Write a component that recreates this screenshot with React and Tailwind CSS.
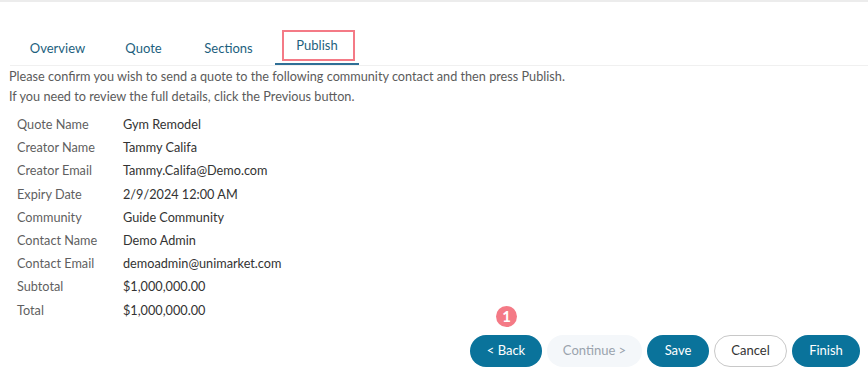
import React from "react";

const rows = [
  ["Quote Name", "Gym Remodel"],
  ["Creator Name", "Tammy Califa"],
  ["Creator Email", "Tammy.Califa@Demo.com"],
  ["Expiry Date", "2/9/2024 12:00 AM"],
  ["Community", "Guide Community"],
  ["Contact Name", "Demo Admin"],
  ["Contact Email", "demoadmin@unimarket.com"],
  ["Subtotal", "$1,000,000.00"],
  ["Total", "$1,000,000.00"],
];

export default function App() {
  return (
    <div
      className="w-[868px] h-[379px] bg-white flex flex-col border-t-2 border-[#ececec] overflow-hidden"
      style={{ fontFamily: "Lato, 'Noto Sans', sans-serif" }}
    >
      <div className="mt-[30px] ml-[10px] flex items-end border-b border-[#f0f0f0] h-[34px] text-[13px] text-[#1d5f7e]">
        <div className="w-[95px] h-full flex items-center justify-center">Overview</div>
        <div className="w-[77px] h-full flex items-center justify-center">Quote</div>
        <div className="w-[93px] h-full flex items-center justify-center">Sections</div>
        <div className="w-[84px] h-full flex items-center justify-center border-b-2 border-[#2f6f96] relative">
          <div className="absolute left-[7px] top-[-2px] w-[73px] h-[31px] border-2 border-[#f47a86]" />
          <span className="mt-[-3px]">Publish</span>
        </div>
      </div>
      <div className="ml-[9px] mt-[0px] text-[12.7px] leading-[20px] text-[#5b5b5b]">
        <div>Please confirm you wish to send a quote to the following community contact and then press Publish.</div>
        <div>If you need to review the full details, click the Previous button.</div>
      </div>
      <div className="ml-[17px] mt-[7px] flex flex-col text-[12.7px]">
        {rows.map(([k, v]) => (
          <div key={k} className="flex h-[23.2px] items-center">
            <div className="w-[106px] text-[#5f5f5f]">{k}</div>
            <div className="text-[#333333]">{v}</div>
          </div>
        ))}
      </div>
      <div className="flex justify-end pr-[8px] mt-[13px] gap-[5px] text-[13px]">
        <div className="relative">
          <div className="absolute left-[26px] top-[-29px] w-[21px] h-[21px] rounded-full bg-[#f47a86] text-white text-[15px] font-bold flex items-center justify-center">1</div>
          <button className="h-[32px] w-[72px] rounded-full bg-[#0a739b] text-white">&lt; Back</button>
        </div>
        <button className="h-[32px] w-[95px] rounded-full bg-[#f4f7fa] text-[#9aa3ad]">Continue &gt;</button>
        <button className="h-[32px] w-[62px] rounded-full bg-[#0a739b] text-white">Save</button>
        <button className="h-[32px] w-[73px] rounded-full bg-white border border-[#c8c8c8] text-[#333]">Cancel</button>
        <button className="h-[32px] w-[68px] rounded-full bg-[#0a739b] text-white">Finish</button>
      </div>
    </div>
  );
}
